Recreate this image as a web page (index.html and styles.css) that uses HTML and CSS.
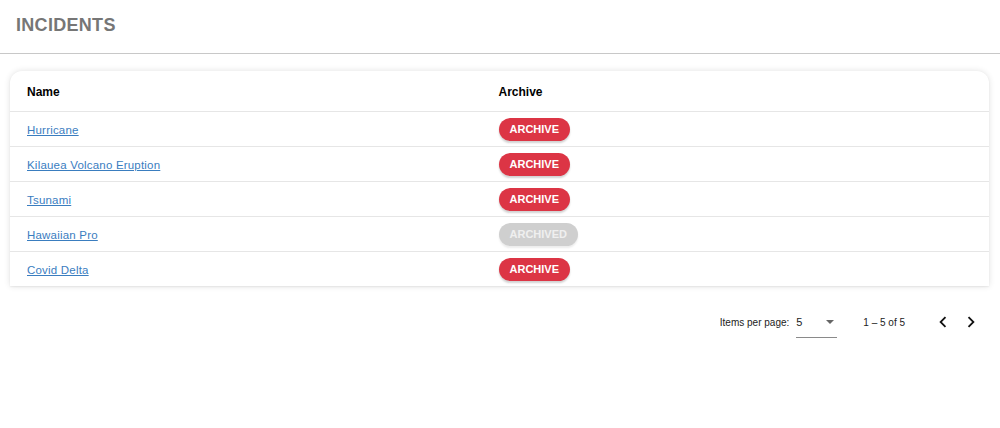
FILE: index.html
```html
<!DOCTYPE html>
<html>
<head>
<meta charset="utf-8">
<link rel="stylesheet" href="styles.css">
</head>
<body>
<header class="page-header">
  <h1 class="title">INCIDENTS</h1>
</header>
<main class="content">
  <section class="card">
    <div class="row head">
      <div class="cell">Name</div>
      <div class="cell">Archive</div>
    </div>
    <div class="row">
      <div class="cell"><a href="#" class="link">Hurricane</a></div>
      <div class="cell"><button class="btn">ARCHIVE</button></div>
    </div>
    <div class="row">
      <div class="cell"><a href="#" class="link">Kilauea Volcano Eruption</a></div>
      <div class="cell"><button class="btn">ARCHIVE</button></div>
    </div>
    <div class="row">
      <div class="cell"><a href="#" class="link">Tsunami</a></div>
      <div class="cell"><button class="btn">ARCHIVE</button></div>
    </div>
    <div class="row">
      <div class="cell"><a href="#" class="link">Hawaiian Pro</a></div>
      <div class="cell"><button class="btn disabled">ARCHIVED</button></div>
    </div>
    <div class="row">
      <div class="cell"><a href="#" class="link">Covid Delta</a></div>
      <div class="cell"><button class="btn">ARCHIVE</button></div>
    </div>
  </section>
  <nav class="paginator">
    <span class="label">Items per page:</span>
    <div class="select">
      <span class="value">5</span>
      <span class="caret"></span>
    </div>
    <span class="range">1 – 5 of 5</span>
    <div class="nav-buttons">
      <svg class="chev" viewBox="0 0 24 24" width="22" height="22"><path d="M15.41 7.41 14 6l-6 6 6 6 1.41-1.41L10.83 12z"/></svg>
      <svg class="chev" viewBox="0 0 24 24" width="22" height="22"><path d="M10 6 8.59 7.41 13.17 12l-4.58 4.59L10 18l6-6z"/></svg>
    </div>
  </nav>
</main>
</body>
</html>
```

FILE: styles.css
```css
* { box-sizing: border-box; }
body {
  margin: 0;
  font-family: "Liberation Sans", Arial, sans-serif;
  background: #fff;
  color: #000;
}
.page-header {
  height: 54px;
  border-bottom: 1px solid #c8c8c8;
  padding: 14px 16px 0;
}
.title {
  margin: 0;
  font-size: 18px;
  font-weight: bold;
  letter-spacing: 0.3px;
  color: #767676;
  line-height: 22px;
}
.content {
  padding: 17px 11px 0 10px;
}
.card {
  background: #fff;
  border-radius: 12px 12px 0 0;
  box-shadow: 0 0 6px rgba(0,0,0,0.12), 0 1px 2px rgba(0,0,0,0.06);
}
.row {
  display: grid;
  grid-template-columns: 1fr 1fr;
  height: 35px;
  border-top: 1px solid #e6e6e6;
  align-items: center;
}
.row.head {
  height: 40px;
  border-top: none;
  font-size: 12px;
  font-weight: bold;
  padding-top: 1px;
}
.cell {
  padding-left: 17px;
}
.row .cell:nth-child(2) { padding-left: 0; margin-left: -1px; }
.link {
  color: #3a7dbf;
  font-size: 11.5px;
  letter-spacing: 0.2px;
  text-decoration: underline;
}
.btn {
  border: none;
  border-radius: 12px;
  background: #dc3545;
  color: #fff;
  font-family: "Liberation Sans", Arial, sans-serif;
  font-weight: bold;
  font-size: 11px;
  height: 23px;
  padding: 0 11px;
  box-shadow: 0 2px 2px rgba(0,0,0,0.18);
  display: block;
}
.btn.disabled {
  background: #cfcfcf;
  color: #efefef;
  box-shadow: 0 2px 2px rgba(0,0,0,0.08);
}
.paginator {
  display: flex;
  justify-content: flex-end;
  align-items: center;
  height: 72px;
  font-size: 10px;
  color: #222;
  padding-right: 7px;
}
.label { margin-right: 7px; }
.select {
  display: flex;
  align-items: center;
  width: 41px;
  height: 24px;
  border-bottom: 1px solid #8a8a8a;
  margin-top: 8px;
  padding-bottom: 7px;
  font-size: 11px;
}
.value { flex: 1; }
.caret {
  width: 0; height: 0;
  border-left: 4px solid transparent;
  border-right: 4px solid transparent;
  border-top: 4px solid #666;
  margin-right: 3px;
}
.range { margin-left: 26px; margin-right: 27px; }
.nav-buttons { display: flex; gap: 6px; }
.chev { fill: #111; }
```
